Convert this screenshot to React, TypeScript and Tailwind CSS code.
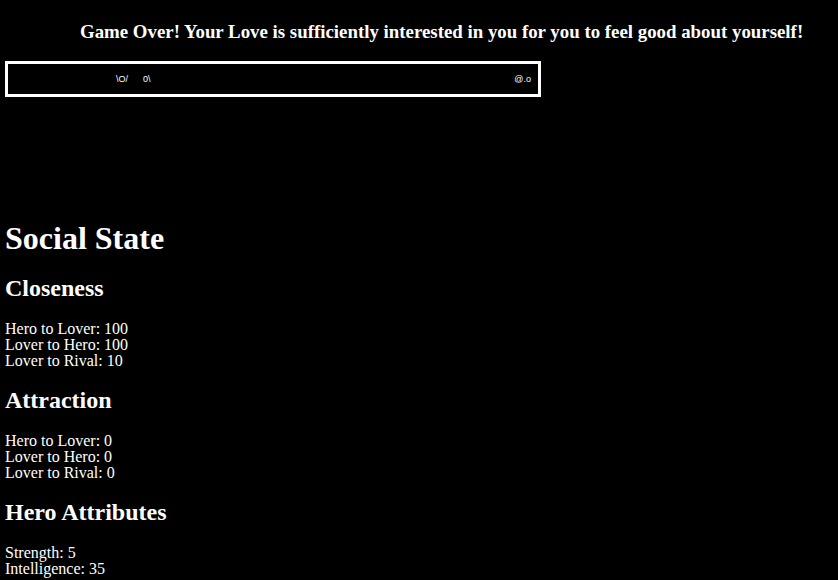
import React from "react";

const serif = { fontFamily: '"Liberation Serif", "Times New Roman", serif' };

function Section({ title, lines }: { title: string; lines: string[] }) {
  return (
    <section className="flex flex-col">
      <h2 className="text-[24px] font-bold leading-[28px] mt-[17px] mb-[19px]">{title}</h2>
      <div className="flex flex-col text-[16px] leading-[16px]">
        {lines.map((l) => (
          <div key={l}>{l}</div>
        ))}
      </div>
    </section>
  );
}

export default function App() {
  return (
    <div className="flex flex-col min-h-[580px] w-[838px] bg-black text-white px-[5px]" style={serif}>
      <div className="pt-[21px] pl-[75px] text-[18.85px] font-bold leading-[22px] whitespace-nowrap">
        Game Over! Your Love is sufficiently interested in you for you to feel good about yourself!
      </div>
      <div
        className="flex items-center mt-[18px] w-[536px] h-[36px] border-[3px] border-white text-[9px] leading-[9px] pr-[7px]"
        style={{ fontFamily: '"Liberation Sans", Arial, sans-serif' }}
      >
        <span className="ml-[108px]">\O/</span>
        <span className="ml-[15px]">0\</span>
        <span className="ml-auto">@.o</span>
      </div>
      <h1 className="mt-[123px] text-[32px] font-bold leading-[37px]">Social State</h1>
      <Section title="Closeness" lines={["Hero to Lover: 100", "Lover to Hero: 100", "Lover to Rival: 10"]} />
      <Section title="Attraction" lines={["Hero to Lover: 0", "Lover to Hero: 0", "Lover to Rival: 0"]} />
      <Section title="Hero Attributes" lines={["Strength: 5", "Intelligence: 35"]} />
    </div>
  );
}
